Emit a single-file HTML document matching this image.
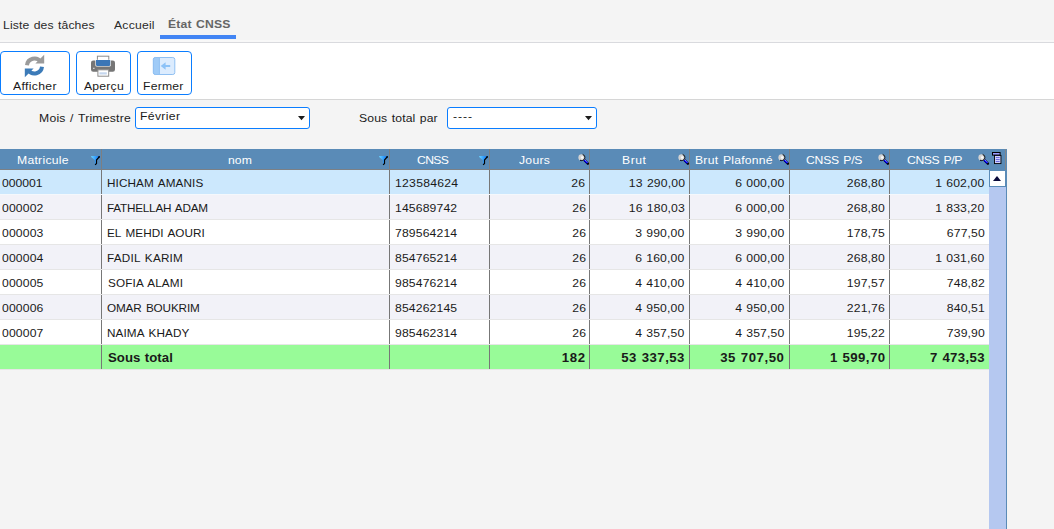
<!DOCTYPE html>
<html>
<head>
<meta charset="utf-8">
<title>État CNSS</title>
<style>
*{box-sizing:border-box;margin:0;padding:0}
html,body{width:1054px;height:529px;overflow:hidden;background:#f4f4f4;font-family:"Liberation Sans",sans-serif;font-size:11.5px;color:#1a1a1a}
.abs{position:absolute}
svg{display:block;overflow:visible}
#tabs{position:absolute;left:0;top:0;width:1054px;height:43px;background:#f4f4f4;border-bottom:1px solid #d9dade}
#tabs:after{content:"";position:absolute;left:0;right:0;bottom:0;height:2px;background:#f8f8f8}
.tab{word-spacing:0.8px;transform:scaleX(1.06);transform-origin:0 0;position:absolute;top:18px;height:14px;line-height:14px;font-size:11.5px;color:#2a2a2a;white-space:nowrap}
#tbar{position:absolute;left:0;top:43px;width:1054px;height:57px;background:#fff;border-bottom:1px solid #d6d6d6}
.btn{position:absolute;top:8px;height:44px;border:1px solid #0a7dff;border-radius:4px;background:#fff}
.btn span{transform:scaleX(1.06);transform-origin:0 0;position:absolute;top:27px;height:14px;line-height:14px;font-size:11.5px;white-space:nowrap;color:#1a1a1a}
.btn svg{position:absolute}
.lbl{word-spacing:0.8px;transform:scaleX(1.06);transform-origin:0 0;position:absolute;top:111px;height:14px;line-height:14px;font-size:11.5px;white-space:nowrap}
.sel{position:absolute;top:107px;height:22px;border:1px solid #0a7dff;border-radius:3px;background:#fff}
.sel span{transform:scaleX(1.06);transform-origin:0 0;position:absolute;left:4.5px;top:1px;height:14px;line-height:14px;font-size:11.5px;white-space:nowrap}
.sel svg{position:absolute;right:4px;top:8px}
#grid{position:absolute;left:0;top:149px;width:1007px;height:380px}
#head{position:absolute;left:0;top:0;width:1007px;height:21px;background:#5a8bb7}
#head:after{content:"";position:absolute;left:1005px;top:0;width:1px;height:21px;background:#80868c}
.h{position:absolute;top:0;height:21px;border-right:1px solid #7c7f83;border-bottom:1px solid #7c8085}
.h span{word-spacing:1px;transform:scaleX(1.06);transform-origin:0 0;position:absolute;top:4px;height:14px;line-height:14px;color:#fff;font-size:11.5px;white-space:nowrap}
.h svg{position:absolute}
.row{position:absolute;left:0;width:989px;height:25px;border-bottom:1px solid #e6e6e6}
.c{position:absolute;top:0;height:24px;border-right:1px solid #777}
.c span{word-spacing:0.6px;transform:scaleX(1.06);transform-origin:0 0;position:absolute;top:6px;height:14px;line-height:14px;font-size:11.5px;white-space:nowrap;letter-spacing:0.5px}
.c span.r{right:3.5px;transform-origin:100% 0}
.c span.n{transform:scaleX(1.02);word-spacing:1.2px}
.tot{background:#98fb98;font-weight:bold}
.tot .c span{font-size:12px;transform:scaleX(1.1)}
.tot .c span.r{right:4.5px}
#sb{position:absolute;left:989px;top:21px;width:18px;height:359px;background:#b5c8f0;border-right:1px solid #5a8bb7}
#sbup{position:absolute;left:0;top:0;width:17px;height:17px;background:#fff;border:1px solid #5a8bb7}
#sbup i{position:absolute;left:3px;top:5px;width:0;height:0;border-left:4.5px solid transparent;border-right:4.5px solid transparent;border-bottom:5px solid #0a0a3a}
</style>
</head>
<body>
<svg width="0" height="0" style="position:absolute"><defs>
<linearGradient id="fg" x1="0" y1="0" x2="1" y2="0"><stop offset="0" stop-color="#6ad2ff"/><stop offset="0.5" stop-color="#35a0ff"/><stop offset="1" stop-color="#1468e2"/></linearGradient>
<radialGradient id="lg" cx="0.5" cy="0.5" r="0.5"><stop offset="0" stop-color="#ffffff"/><stop offset="0.5" stop-color="#f4f4f4"/><stop offset="1" stop-color="#d2d2d2"/></radialGradient>
<g id="flt"><path d="M0.200 0H8.700V0.900L5.500 4.300V7.600L3.900 9.200V4.300L0.200 0.900Z" fill="url(#fg)"/><path d="M8.400 0.600L5.500 4V7.500L4.100 8.900" fill="none" stroke="#000" stroke-width="1.200"/><rect x="7.600" y="0.100" width="1.200" height="1.500" fill="#000"/></g>
<g id="mag"><path d="M6.400 6.200L9.900 9.700" stroke="#000" stroke-width="2.400" stroke-linecap="round"/><path d="M6 5.700L9.500 9.200" stroke="#0000ff" stroke-width="1.900"/><path d="M6.300 5.200L9.700 8.600" stroke="#fff" stroke-width="0.900" stroke-dasharray="0.900 0.800"/><circle cx="3.600" cy="3.400" r="3.200" fill="#d2d2d2"/><circle cx="4.200" cy="3.500" r="1.700" fill="url(#lg)"/><path d="M4.700 0.400A3.200 3.200 0 1 1 2 6.170" fill="none" stroke="#000" stroke-width="1"/></g>
</defs></svg>
<div id="tabs">
  <div class="tab" id="t1" style="letter-spacing:0.108px;margin-left:-0.26px;left:3px">Liste des tâches</div>
  <div class="tab" id="t2" style="letter-spacing:0.2px;margin-left:0px;left:114px">Accueil</div>
  <div class="tab" id="t3" style="letter-spacing:0.153px;margin-left:0.98px;left:167px;top:17px;font-weight:bold;color:#666">État CNSS</div>
  <div class="abs" style="left:160px;top:35px;width:76px;height:4px;background:#4285f4"></div>
</div>
<div id="tbar">
  <div class="btn" style="left:0;width:70px">
    <svg style="left:23px;top:2px" width="22" height="24" viewBox="0 0 22 24"><path d="M3 11.200A7.500 7.500 0 0 1 16.600 7.700" fill="none" stroke="#9b9b9b" stroke-width="4"/><path d="M20.200 0.800V9.600H11.400Z" fill="#9b9b9b"/><path d="M18 12.800A7.500 7.500 0 0 1 4.400 16.300" fill="none" stroke="#3c7bb8" stroke-width="4"/><path d="M0.800 23.200V14.400H9.600Z" fill="#3c7bb8"/></svg>
    <span id="b1" style="letter-spacing:0.322px;margin-left:0px;left:12px">Afficher</span></div>
  <div class="btn" style="left:76px;width:55px">
    <svg style="left:14px;top:3px" width="26" height="23" viewBox="0 0 26 23"><rect x="6.400" y="1.200" width="11.400" height="7" fill="#fff" stroke="#8c8c8c"/><path d="M2.200 5.600H21.800A2.200 2.200 0 0 1 24 7.800V14.500A2.200 2.200 0 0 1 21.800 16.700H2.200A2.200 2.200 0 0 1 0 14.500V7.800A2.200 2.200 0 0 1 2.200 5.600Z" fill="#767676"/><path d="M4.400 4.700H19.800V10.200A1.400 1.400 0 0 1 18.400 11.600H5.800A1.400 1.400 0 0 1 4.400 10.200Z" fill="#fff"/><path d="M5 5H19.200V9.800A1.200 1.200 0 0 1 18 11H6.200A1.200 1.200 0 0 1 5 9.800Z" fill="#3b76b6"/><rect x="2" y="12.800" width="1.600" height="1" fill="#e0e0e0"/><rect x="6.900" y="14.800" width="10.800" height="6.400" fill="#fff" stroke="#8c8c8c"/><rect x="8.400" y="17.300" width="7.400" height="2.200" fill="#c4d6ee"/></svg>
    <span id="b2" style="letter-spacing:0.2px;margin-left:0.0px;left:6.500px">Aperçu</span></div>
  <div class="btn" style="left:137px;width:55px">
    <svg style="left:15px;top:5px" width="23" height="19" viewBox="0 0 23 19"><rect x="0.400" y="0.500" width="21.400" height="17" rx="2" fill="#dcecfe" stroke="#90c0f2"/><path d="M2.400 0.500H6.400V17.500H2.400A2 2 0 0 1 0.400 15.500V2.500A2 2 0 0 1 2.400 0.500Z" fill="#9fcbf7" stroke="#90c0f2"/><path d="M7.700 9L12.600 5.300V8H17.200V10H12.600V12.700Z" fill="#8cc2f7"/></svg>
    <span id="b3" style="letter-spacing:0.2px;margin-left:-1.2px;left:6.500px">Fermer</span></div>
</div>
<div class="lbl" id="l1" style="letter-spacing:0.21px;margin-left:-0.25px;left:39px">Mois / Trimestre</div>
<div class="sel" style="left:135px;width:175px"><span id="s1" style="letter-spacing:0.325px;margin-left:-0.5px">Février</span><svg width="7" height="5" viewBox="0 0 7 5"><path d="M0 0H7L3.500 4.300Z" fill="#1c1c1c"/></svg></div>
<div class="lbl" id="l2" style="letter-spacing:0.127px;margin-left:0px;left:359px">Sous total par</div>
<div class="sel" style="left:447px;width:150px"><span id="s2" style="letter-spacing:0.867px;margin-left:0.0px">----</span><svg width="7" height="5" viewBox="0 0 7 5"><path d="M0 0H7L3.500 4.300Z" fill="#1c1c1c"/></svg></div>

<div id="grid">
  <div id="head">
    <div class="h" style="left:0px;width:102px"><span id="h0" style="left:17.0px;letter-spacing:0.25px">Matricule</span><svg style="left:91.2px;top:6.700px" width="9" height="9"><use href="#flt"/></svg></div>
    <div class="h" style="left:102px;width:288px"><span id="h1" style="left:125.8px;letter-spacing:0.075px">nom</span><svg style="left:277.2px;top:6.700px" width="9" height="9"><use href="#flt"/></svg></div>
    <div class="h" style="left:390px;width:100px"><span id="h2" style="left:27.2px;letter-spacing:-0.633px">CNSS</span><svg style="left:89.19999999999999px;top:6.700px" width="9" height="9"><use href="#flt"/></svg></div>
    <div class="h" style="left:490px;width:100px"><span id="h3" style="left:28.5px;letter-spacing:0.25px">Jours</span><svg style="left:87.70000000000005px;top:5px" width="11" height="11"><use href="#mag"/></svg></div>
    <div class="h" style="left:590px;width:100px"><span id="h4" style="left:32.0px;letter-spacing:0.5px">Brut</span><svg style="left:87.70000000000005px;top:5px" width="11" height="11"><use href="#mag"/></svg></div>
    <div class="h" style="left:690px;width:100px"><span id="h5" style="left:4.5px;letter-spacing:0.208px">Brut Plafonné</span><svg style="left:87.70000000000005px;top:5px" width="11" height="11"><use href="#mag"/></svg></div>
    <div class="h" style="left:790px;width:100px"><span id="h6" style="left:15.9px;letter-spacing:-0.207px">CNSS P/S</span><svg style="left:87.70000000000005px;top:5px" width="11" height="11"><use href="#mag"/></svg></div>
    <div class="h" style="left:890px;width:99px;border-right:none"><span id="h7" style="left:16.500000000000046px;letter-spacing:-0.35px">CNSS P/P</span><svg style="left:87.70000000000005px;top:5px" width="11" height="11"><use href="#mag"/></svg></div>
    <svg class="abs" style="left:992px;top:3px" width="10" height="13" viewBox="0 0 10 13"><rect x="0.500" y="0.500" width="7.600" height="2.600" fill="#9c9cff" stroke="#000"/><rect x="2.450" y="3.400" width="6.500" height="8.200" fill="#d0d0ff" stroke="#000" stroke-width="0.900"/><path d="M3.800 5.500H7.700M3.800 7.500H7.700M3.800 9.500H7.700" stroke="#6060d8" stroke-width="0.900"/></svg>
  </div>
  <div id="rows">
    <div class="row" style="top:21px;background:#cce8fd;border-bottom-color:#f4f8fc"><div class="c" style="left:0px;width:102px"><span id="c0_0" style="left:1.75px;letter-spacing:-0.02px">000001</span></div><div class="c" style="left:102px;width:288px"><span id="c0_1" class="n" style="left:4.7px;letter-spacing:0.092px">HICHAM AMANIS</span></div><div class="c" style="left:390px;width:100px"><span id="c0_2" style="left:5.0px;letter-spacing:0.25px">123584624</span></div><div class="c" style="left:490px;width:100px"><span id="c0_3" class="r" style="letter-spacing:0.25px;margin-right:-0.25px">26</span></div><div class="c" style="left:590px;width:100px"><span id="c0_4" class="r" style="letter-spacing:0.156px;margin-right:0.594px">13 290,00</span></div><div class="c" style="left:690px;width:100px"><span id="c0_5" class="r" style="letter-spacing:0.129px;margin-right:0.621px">6 000,00</span></div><div class="c" style="left:790px;width:100px"><span id="c0_6" class="r" style="letter-spacing:0.129px;margin-right:0.621px">268,80</span></div><div class="c" style="left:890px;width:99px;border-right:none"><span id="c0_7" class="r" style="letter-spacing:0.129px;margin-right:0.621px">1 602,00</span></div></div>
    <div class="row" style="top:46px;background:#f2f2f8"><div class="c" style="left:0px;width:102px"><span id="c1_0" style="left:1.75px;letter-spacing:0.129px">000002</span></div><div class="c" style="left:102px;width:288px"><span id="c1_1" class="n" style="left:4.5px;letter-spacing:-0.223px">FATHELLAH ADAM</span></div><div class="c" style="left:390px;width:100px"><span id="c1_2" style="left:5.0px;letter-spacing:0.129px">145689742</span></div><div class="c" style="left:490px;width:100px"><span id="c1_3" class="r" style="letter-spacing:0.129px;margin-right:-0.129px">26</span></div><div class="c" style="left:590px;width:100px"><span id="c1_4" class="r" style="letter-spacing:0.129px;margin-right:0.621px">16 180,03</span></div><div class="c" style="left:690px;width:100px"><span id="c1_5" class="r" style="letter-spacing:0.129px;margin-right:0.621px">6 000,00</span></div><div class="c" style="left:790px;width:100px"><span id="c1_6" class="r" style="letter-spacing:0.129px;margin-right:0.621px">268,80</span></div><div class="c" style="left:890px;width:99px;border-right:none"><span id="c1_7" class="r" style="letter-spacing:0.129px;margin-right:0.621px">1 833,20</span></div></div>
    <div class="row" style="top:71px;background:#fff"><div class="c" style="left:0px;width:102px"><span id="c2_0" style="left:1.75px;letter-spacing:0.129px">000003</span></div><div class="c" style="left:102px;width:288px"><span id="c2_1" class="n" style="left:4.7px;letter-spacing:0.039px">EL MEHDI AOURI</span></div><div class="c" style="left:390px;width:100px"><span id="c2_2" style="left:5.0px;letter-spacing:0.129px">789564214</span></div><div class="c" style="left:490px;width:100px"><span id="c2_3" class="r" style="letter-spacing:0.129px;margin-right:-0.129px">26</span></div><div class="c" style="left:590px;width:100px"><span id="c2_4" class="r" style="letter-spacing:0.129px;margin-right:0.621px">3 990,00</span></div><div class="c" style="left:690px;width:100px"><span id="c2_5" class="r" style="letter-spacing:0.129px;margin-right:0.621px">3 990,00</span></div><div class="c" style="left:790px;width:100px"><span id="c2_6" class="r" style="letter-spacing:0.129px;margin-right:0.621px">178,75</span></div><div class="c" style="left:890px;width:99px;border-right:none"><span id="c2_7" class="r" style="letter-spacing:0.129px;margin-right:0.621px">677,50</span></div></div>
    <div class="row" style="top:96px;background:#f2f2f8"><div class="c" style="left:0px;width:102px"><span id="c3_0" style="left:1.75px;letter-spacing:0.129px">000004</span></div><div class="c" style="left:102px;width:288px"><span id="c3_1" class="n" style="left:4.7px;letter-spacing:0.2px">FADIL KARIM</span></div><div class="c" style="left:390px;width:100px"><span id="c3_2" style="left:5.0px;letter-spacing:0.129px">854765214</span></div><div class="c" style="left:490px;width:100px"><span id="c3_3" class="r" style="letter-spacing:0.129px;margin-right:-0.129px">26</span></div><div class="c" style="left:590px;width:100px"><span id="c3_4" class="r" style="letter-spacing:0.129px;margin-right:0.621px">6 160,00</span></div><div class="c" style="left:690px;width:100px"><span id="c3_5" class="r" style="letter-spacing:0.129px;margin-right:0.621px">6 000,00</span></div><div class="c" style="left:790px;width:100px"><span id="c3_6" class="r" style="letter-spacing:0.129px;margin-right:0.621px">268,80</span></div><div class="c" style="left:890px;width:99px;border-right:none"><span id="c3_7" class="r" style="letter-spacing:0.129px;margin-right:0.621px">1 031,60</span></div></div>
    <div class="row" style="top:121px;background:#fff"><div class="c" style="left:0px;width:102px"><span id="c4_0" style="left:1.75px;letter-spacing:0.129px">000005</span></div><div class="c" style="left:102px;width:288px"><span id="c4_1" class="n" style="left:6.1px;letter-spacing:0.14px">SOFIA ALAMI</span></div><div class="c" style="left:390px;width:100px"><span id="c4_2" style="left:5.0px;letter-spacing:0.129px">985476214</span></div><div class="c" style="left:490px;width:100px"><span id="c4_3" class="r" style="letter-spacing:0.129px;margin-right:-0.129px">26</span></div><div class="c" style="left:590px;width:100px"><span id="c4_4" class="r" style="letter-spacing:0.129px;margin-right:0.621px">4 410,00</span></div><div class="c" style="left:690px;width:100px"><span id="c4_5" class="r" style="letter-spacing:0.129px;margin-right:0.621px">4 410,00</span></div><div class="c" style="left:790px;width:100px"><span id="c4_6" class="r" style="letter-spacing:0.129px;margin-right:0.621px">197,57</span></div><div class="c" style="left:890px;width:99px;border-right:none"><span id="c4_7" class="r" style="letter-spacing:0.129px;margin-right:0.621px">748,82</span></div></div>
    <div class="row" style="top:146px;background:#f2f2f8"><div class="c" style="left:0px;width:102px"><span id="c5_0" style="left:1.75px;letter-spacing:0.129px">000006</span></div><div class="c" style="left:102px;width:288px"><span id="c5_1" class="n" style="left:5.1px;letter-spacing:-0.145px">OMAR BOUKRIM</span></div><div class="c" style="left:390px;width:100px"><span id="c5_2" style="left:5.0px;letter-spacing:0.129px">854262145</span></div><div class="c" style="left:490px;width:100px"><span id="c5_3" class="r" style="letter-spacing:0.129px;margin-right:-0.129px">26</span></div><div class="c" style="left:590px;width:100px"><span id="c5_4" class="r" style="letter-spacing:0.129px;margin-right:0.621px">4 950,00</span></div><div class="c" style="left:690px;width:100px"><span id="c5_5" class="r" style="letter-spacing:0.129px;margin-right:0.621px">4 950,00</span></div><div class="c" style="left:790px;width:100px"><span id="c5_6" class="r" style="letter-spacing:0.129px;margin-right:0.621px">221,76</span></div><div class="c" style="left:890px;width:99px;border-right:none"><span id="c5_7" class="r" style="letter-spacing:0.129px;margin-right:0.621px">840,51</span></div></div>
    <div class="row" style="top:171px;background:#fff"><div class="c" style="left:0px;width:102px"><span id="c6_0" style="left:1.75px;letter-spacing:0.129px">000007</span></div><div class="c" style="left:102px;width:288px"><span id="c6_1" class="n" style="left:4.7px;letter-spacing:0.1px">NAIMA KHADY</span></div><div class="c" style="left:390px;width:100px"><span id="c6_2" style="left:5.0px;letter-spacing:0.129px">985462314</span></div><div class="c" style="left:490px;width:100px"><span id="c6_3" class="r" style="letter-spacing:0.129px;margin-right:-0.129px">26</span></div><div class="c" style="left:590px;width:100px"><span id="c6_4" class="r" style="letter-spacing:0.129px;margin-right:0.621px">4 357,50</span></div><div class="c" style="left:690px;width:100px"><span id="c6_5" class="r" style="letter-spacing:0.129px;margin-right:0.621px">4 357,50</span></div><div class="c" style="left:790px;width:100px"><span id="c6_6" class="r" style="letter-spacing:0.129px;margin-right:0.621px">195,22</span></div><div class="c" style="left:890px;width:99px;border-right:none"><span id="c6_7" class="r" style="letter-spacing:0.129px;margin-right:0.621px">739,90</span></div></div>
    <div class="row tot" style="top:196px"><div class="c" style="left:0px;width:102px"></div><div class="c" style="left:102px;width:288px"><span id="c7_1" style="left:5.9px;letter-spacing:0.039px">Sous total</span></div><div class="c" style="left:390px;width:100px"></div><div class="c" style="left:490px;width:100px"><span id="c7_3" class="r" style="letter-spacing:0.625px;margin-right:-1.275px">182</span></div><div class="c" style="left:590px;width:100px"><span id="c7_4" class="r" style="letter-spacing:0.437px;margin-right:-0.437px">53 337,53</span></div><div class="c" style="left:690px;width:100px"><span id="c7_5" class="r" style="letter-spacing:0.49px;margin-right:0.26px">35 707,50</span></div><div class="c" style="left:790px;width:100px"><span id="c7_6" class="r" style="letter-spacing:0.393px;margin-right:-0.793px">1 599,70</span></div><div class="c" style="left:890px;width:99px;border-right:none"><span id="c7_7" class="r" style="letter-spacing:0.321px;margin-right:-0.021px">7 473,53</span></div></div>
  </div>
  <div id="sb"><div id="sbup"><i></i></div></div>
</div>
</body>
</html>
